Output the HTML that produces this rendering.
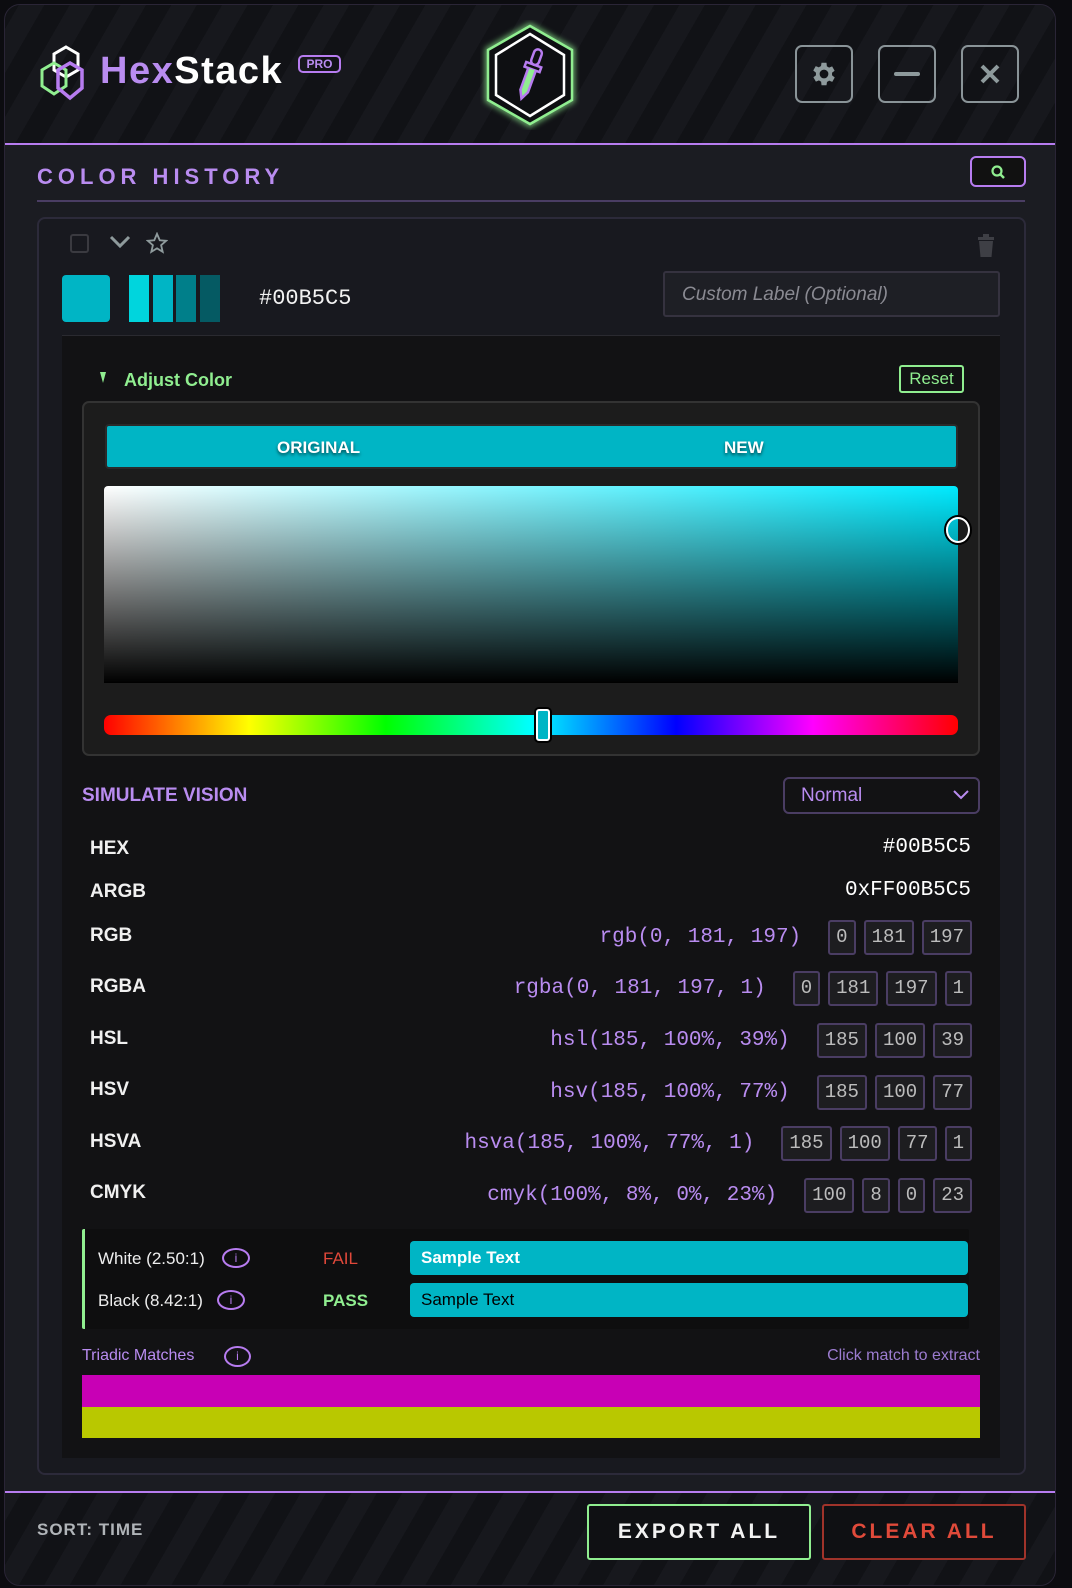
<!DOCTYPE html>
<html><head><meta charset="utf-8"><style>
*{box-sizing:border-box;margin:0;padding:0}
body{width:1072px;height:1588px;background:#0c0c10;font-family:"Liberation Sans",sans-serif;position:relative;overflow:hidden}
.a{position:absolute}
.frame{left:4px;top:4px;width:1052px;height:1582px;border-radius:16px;background:#1b1c22;border:1px solid #2a2536;overflow:hidden}
.stripe{background:repeating-linear-gradient(-60deg,#111216 0 22px,#17181d 22px 44px)}
.mono{font-family:"Liberation Mono",monospace}
.lbl{left:90px;color:#f0f0f0;font-size:19px;font-weight:bold}
.row{right:100px;display:flex;align-items:center;gap:8px}
.row .t{color:#b98cf0;font-size:21px;margin-right:19px;font-family:"Liberation Mono",monospace}
.bx{height:35px;border:2px solid #4a3d63;background:#1d1d20;border-radius:3px;color:#bcbcbc;font-family:"Liberation Mono",monospace;font-size:19px;padding:0 6px;line-height:31px}
.btn{width:58px;height:58px;border:2px solid #8a9498;border-radius:7px;top:45px;display:flex;align-items:center;justify-content:center}
</style></head><body>
<div class="a frame">
 <div class="a stripe" style="left:0;top:0;width:1052px;height:138px"></div>
 <div class="a" style="left:0;top:138px;width:1052px;height:2px;background:#b77cf0"></div>
 <div class="a stripe" style="left:0;top:1486px;width:1052px;height:100px"></div>
 <div class="a" style="left:0;top:1486px;width:1052px;height:2px;background:#b77cf0"></div>
</div>
<!-- logo -->
<svg class="a" style="left:36px;top:44px" width="64" height="60" viewBox="0 0 64 60">
 <polygon points="30,3 42,10 42,26 30,33 18,26 18,10" fill="none" stroke="#fff" stroke-width="3"/>
 <polygon points="18,19 30,26 30,42 18,50 6,42 6,26" fill="none" stroke="#90ee90" stroke-width="3"/>
 <polygon points="34,19 46,26 46,44 34,54 22,44 22,26" fill="none" stroke="#b77cf0" stroke-width="3.5"/>
</svg>
<div class="a" style="left:100px;top:50px;font-size:38px;font-weight:bold;letter-spacing:1.5px"><span style="color:#b98cf0">Hex</span><span style="color:#fff">Stack</span></div>
<div class="a" style="left:298px;top:55px;width:43px;height:18px;border:2px solid #b77cf0;border-radius:5px;color:#b98cf0;font-size:12px;font-weight:bold;text-align:center;line-height:14px">PRO</div>
<!-- center icon -->
<svg class="a" style="left:480px;top:20px" width="100" height="110" viewBox="0 0 100 110">
 <defs><filter id="g"><feGaussianBlur stdDeviation="3"/></filter></defs>
 <polygon points="50,6 92,30 92,80 50,104 8,80 8,30" fill="#0e0f12" stroke="#90ee90" stroke-width="6" filter="url(#g)" opacity=".7"/>
 <polygon points="50,6 92,30 92,80 50,104 8,80 8,30" fill="#0e0f12" stroke="#90ee90" stroke-width="2.5"/>
 <polygon points="50,14 84,35 84,75 50,96 16,75 16,35" fill="none" stroke="#fff" stroke-width="2.5"/>
 <g transform="rotate(20 50 55)"><rect x="46" y="28" width="8" height="16" rx="4" fill="none" stroke="#b77cf0" stroke-width="2.5"/><rect x="42" y="44" width="16" height="5" fill="none" stroke="#b77cf0" stroke-width="2.5"/><path d="M46 49 L46 72 L50 80 L54 72 L54 49" fill="#90ee90" stroke="#b77cf0" stroke-width="2.5"/></g>
</svg>
<!-- buttons -->
<div class="a btn" style="left:795px"><svg width="30" height="30" viewBox="0 0 24 24"><path fill="#8e9a9c" d="M19.4 13a7.5 7.5 0 000-2l2.1-1.6-2-3.5-2.5 1a7 7 0 00-1.7-1L15 3h-4l-.4 2.7a7 7 0 00-1.7 1l-2.5-1-2 3.5L6.6 11a7.5 7.5 0 000 2l-2.1 1.6 2 3.5 2.5-1a7 7 0 001.7 1L11 21h4l.4-2.7a7 7 0 001.7-1l2.5 1 2-3.5zM13 15.5a3.5 3.5 0 110-7 3.5 3.5 0 010 7z" transform="translate(-1 0)"/></svg></div>
<div class="a btn" style="left:878px"><div style="width:26px;height:4px;background:#8e9a9c;border-radius:2px"></div></div>
<div class="a btn" style="left:961px"><svg width="24" height="24" viewBox="0 0 24 24"><path d="M4 4L20 20M20 4L4 20" stroke="#8e9a9c" stroke-width="4"/></svg></div>
<!-- color history -->
<div class="a" style="left:37px;top:164px;color:#b98cf0;font-size:22px;font-weight:bold;letter-spacing:5px">COLOR HISTORY</div>
<div class="a" style="left:37px;top:200px;width:988px;height:2px;background:#4a3d63"></div>
<div class="a" style="left:970px;top:156px;width:56px;height:31px;border:2px solid #b77cf0;border-radius:6px;background:#111;display:flex;align-items:center;justify-content:center"><svg width="16" height="16" viewBox="0 0 16 16"><circle cx="7" cy="7" r="4.5" fill="none" stroke="#90ee90" stroke-width="2.2"/><path d="M10 10L14 14" stroke="#90ee90" stroke-width="2.5"/></svg></div>
<!-- card -->
<div class="a" style="left:37px;top:217px;width:989px;height:1258px;border:2px solid #2c2a3a;border-radius:8px;background:#18191f"></div>
<div class="a" style="left:70px;top:234px;width:19px;height:19px;border:2px solid #3a3a40;border-radius:3px"></div>
<svg class="a" style="left:108px;top:234px" width="24" height="16" viewBox="0 0 24 16"><path d="M3 3L12 12L21 3" fill="none" stroke="#8e9a9c" stroke-width="3"/></svg>
<svg class="a" style="left:146px;top:232px" width="22" height="22" viewBox="0 0 24 24"><path d="M12 2l3 7 7 .6-5.5 4.8 1.7 7.2L12 17.8 5.8 21.6l1.7-7.2L2 9.6 9 9z" fill="none" stroke="#8e9a9c" stroke-width="2"/></svg>
<svg class="a" style="left:976px;top:234px" width="20" height="24" viewBox="0 0 20 24"><rect x="2" y="3" width="16" height="3" fill="#3e3f45"/><rect x="7" y="0" width="6" height="3" fill="#3e3f45"/><path d="M3 7h14l-1.5 16h-11z" fill="#3e3f45"/></svg>
<div class="a" style="left:62px;top:275px;width:48px;height:47px;border-radius:4px;background:#00b5c5"></div>
<div class="a" style="left:129px;top:275px;width:20px;height:47px;background:#00d5dd"></div>
<div class="a" style="left:153px;top:275px;width:20px;height:47px;background:#00b5c5"></div>
<div class="a" style="left:176px;top:275px;width:20px;height:47px;background:#007f8a"></div>
<div class="a" style="left:200px;top:275px;width:20px;height:47px;background:#055a63"></div>
<div class="a mono" style="left:259px;top:286px;color:#f2f2f2;font-size:22px">#00B5C5</div>
<div class="a" style="left:663px;top:271px;width:337px;height:46px;background:#1e1f25;border:2px solid #35323f;border-radius:3px;color:#8a8a92;font-style:italic;font-size:19px;padding:11px 0 0 17px">Custom Label (Optional)</div>
<div class="a" style="left:62px;top:335px;width:938px;height:1123px;background:#121214;border-top:1px solid #2a2a30"></div>
<!-- adjust -->
<div class="a" style="left:100px;top:372px;width:0;height:0;border-left:3px solid transparent;border-right:3px solid transparent;border-top:11px solid #90ee90"></div>
<div class="a" style="left:124px;top:370px;color:#90ee90;font-size:18px;font-weight:bold">Adjust Color</div>
<div class="a" style="left:899px;top:365px;width:65px;height:28px;border:2px solid #90ee90;border-radius:3px;color:#90ee90;font-size:17px;text-align:center;line-height:24px">Reset</div>
<div class="a" style="left:82px;top:401px;width:898px;height:355px;background:#1c1c1c;border:2px solid #333;border-radius:7px"></div>
<div class="a" style="left:105px;top:424px;width:853px;height:45px;background:#00b5c5;border:2px solid #2a2a2a;border-radius:4px;color:#fff;font-size:17px;font-weight:bold;text-shadow:0 2px 3px rgba(0,0,0,.6)"><span class="a" style="left:170px;top:12px">ORIGINAL</span><span class="a" style="left:617px;top:12px">NEW</span></div>
<div class="a" style="left:104px;top:486px;width:854px;height:197px;border-radius:4px 4px 0 0;background:linear-gradient(to bottom,transparent,#000),linear-gradient(to right,#fff,#00eaff)"></div>
<div class="a" style="left:946px;top:517px;width:24px;height:26px;border-radius:50%;border:2px solid #fff;box-shadow:0 0 0 2px #000"></div>
<div class="a" style="left:104px;top:715px;width:854px;height:20px;border-radius:7px;background:linear-gradient(to right,#f00 0%,#ff0 17%,#0f0 33%,#0ff 50%,#00f 67%,#f0f 83%,#f00 100%)"></div>
<div class="a" style="left:536px;top:709px;width:14px;height:32px;border:2px solid #fff;border-radius:3px;background:#00b5c5;box-shadow:0 0 0 2px #000"></div>
<!-- simulate -->
<div class="a" style="left:82px;top:785px;color:#b98cf0;font-size:19px;font-weight:bold">SIMULATE VISION</div>
<div class="a" style="left:783px;top:777px;width:197px;height:37px;border:2px solid #4a3d63;border-radius:6px;color:#b98cf0;font-size:19px;padding:6px 0 0 16px">Normal<svg class="a" style="right:8px;top:10px" width="18" height="12" viewBox="0 0 18 12"><path d="M2 2L9 9L16 2" fill="none" stroke="#b98cf0" stroke-width="2"/></svg></div>
<!-- values -->
<div class="a lbl" style="top:838px">HEX</div><div class="a mono" style="right:101px;top:836px;color:#fff;font-size:21px">#00B5C5</div>
<div class="a lbl" style="top:881px">ARGB</div><div class="a mono" style="right:101px;top:879px;color:#fff;font-size:21px">0xFF00B5C5</div>
<div class="a lbl" style="top:925px">RGB</div>
<div class="a row" style="top:920px"><span class="t">rgb(0, 181, 197)</span><span class="bx">0</span><span class="bx">181</span><span class="bx">197</span></div>
<div class="a lbl" style="top:976px">RGBA</div>
<div class="a row" style="top:971px"><span class="t">rgba(0, 181, 197, 1)</span><span class="bx">0</span><span class="bx">181</span><span class="bx">197</span><span class="bx">1</span></div>
<div class="a lbl" style="top:1028px">HSL</div>
<div class="a row" style="top:1023px"><span class="t">hsl(185, 100%, 39%)</span><span class="bx">185</span><span class="bx">100</span><span class="bx">39</span></div>
<div class="a lbl" style="top:1079px">HSV</div>
<div class="a row" style="top:1075px"><span class="t">hsv(185, 100%, 77%)</span><span class="bx">185</span><span class="bx">100</span><span class="bx">77</span></div>
<div class="a lbl" style="top:1131px">HSVA</div>
<div class="a row" style="top:1126px"><span class="t">hsva(185, 100%, 77%, 1)</span><span class="bx">185</span><span class="bx">100</span><span class="bx">77</span><span class="bx">1</span></div>
<div class="a lbl" style="top:1182px">CMYK</div>
<div class="a row" style="top:1178px"><span class="t">cmyk(100%, 8%, 0%, 23%)</span><span class="bx">100</span><span class="bx">8</span><span class="bx">0</span><span class="bx">23</span></div>
<!-- contrast -->
<div class="a" style="left:82px;top:1229px;width:887px;height:100px;background:#0e0e0f;border-left:3px solid #90ee90;border-radius:2px"></div>
<div class="a" style="left:98px;top:1249px;color:#eee;font-size:17px">White (2.50:1)</div>
<div class="a" style="left:222px;top:1248px;width:28px;height:20px;border:2px solid #b77cf0;border-radius:50%;color:#b77cf0;font-size:12px;text-align:center;line-height:16px">i</div>
<div class="a" style="left:98px;top:1291px;color:#eee;font-size:17px">Black (8.42:1)</div>
<div class="a" style="left:217px;top:1290px;width:28px;height:20px;border:2px solid #b77cf0;border-radius:50%;color:#b77cf0;font-size:12px;text-align:center;line-height:16px">i</div>
<div class="a" style="left:323px;top:1249px;color:#e0483a;font-size:17px">FAIL</div>
<div class="a" style="left:323px;top:1291px;color:#90ee90;font-size:17px;font-weight:bold">PASS</div>
<div class="a" style="left:410px;top:1241px;width:558px;height:34px;background:#00b5c5;border-radius:4px;color:#fff;font-size:17px;font-weight:bold;padding:7px 0 0 11px">Sample Text</div>
<div class="a" style="left:410px;top:1283px;width:558px;height:34px;background:#00b5c5;border-radius:4px;color:#000;font-size:17px;padding:7px 0 0 11px">Sample Text</div>
<div class="a" style="left:82px;top:1347px;color:#b98cf0;font-size:16px">Triadic Matches</div>
<div class="a" style="left:224px;top:1346px;width:27px;height:21px;border:2px solid #b77cf0;border-radius:50%;color:#b77cf0;font-size:12px;text-align:center;line-height:17px">i</div>
<div class="a" style="right:92px;top:1347px;color:#9c7cd0;font-size:16px">Click match to extract</div>
<div class="a" style="left:82px;top:1375px;width:898px;height:32px;background:#c800b5"></div>
<div class="a" style="left:82px;top:1407px;width:898px;height:31px;background:#b9c800"></div>
<!-- footer -->
<div class="a" style="left:37px;top:1520px;color:#b0b4b8;font-size:17px;font-weight:bold;letter-spacing:1px">SORT: TIME</div>
<div class="a" style="left:587px;top:1504px;width:224px;height:56px;border:2px solid #90ee90;border-radius:3px;background:#0f1013;color:#f2f2f2;font-size:21px;font-weight:bold;letter-spacing:3px;text-align:center;line-height:52px">EXPORT ALL</div>
<div class="a" style="left:822px;top:1504px;width:204px;height:56px;border:2px solid #a0332a;border-radius:3px;background:#0f1013;color:#e04a3a;font-size:21px;font-weight:bold;letter-spacing:3px;text-align:center;line-height:52px">CLEAR ALL</div>
</body></html>
